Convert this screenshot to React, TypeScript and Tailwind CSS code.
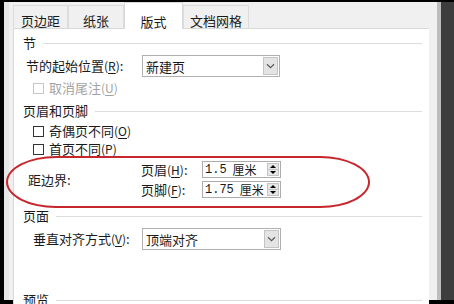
import React from 'react'

const FONT = "font-['Noto_Sans_CJK_SC','Microsoft_YaHei',sans-serif]"

const TABS = [
  { label: '页边距', w: 'w-[55px]', active: false },
  { label: '纸张', w: 'w-[56px]', active: false },
  { label: '版式', w: 'w-[59px]', active: true },
  { label: '文档网格', w: 'w-[66px]', active: false },
]

function GroupHeader({ title, className = '' }: { title: string; className?: string }) {
  return (
    <div className={`flex h-[16px] items-center ${className}`}>
      <span className="pl-[9px] pr-[7px] text-[13px] leading-[16px]">{title}</span>
      <div className="h-px flex-1 bg-[#dcdcdc]" />
    </div>
  )
}

// access key shown as "(X)" with the letter underlined
function Key({ k }: { k: string }) {
  return (
    <span className="text-[12px]">
      (<span className="underline underline-offset-2">{k}</span>)
    </span>
  )
}

function Chevron() {
  return (
    <svg width="9" height="6" viewBox="0 0 9 6">
      <path d="M1 1.2 L4.5 4.6 L8 1.2" fill="none" stroke="#5a5a5a" strokeWidth="1.2" />
    </svg>
  )
}

function Select({ value, className }: { value: string; className: string }) {
  return (
    <div className={`flex h-[22px] border border-[#b0b0b0] bg-white ${className}`}>
      <div className="flex flex-1 items-center pl-[3px] text-[13px] leading-none">{value}</div>
      <div className="m-px flex w-[15px] items-center justify-center border border-[#c4c4c4] bg-[#e4e4e4]">
        <Chevron />
      </div>
    </div>
  )
}

function Checkbox({ label, k, disabled }: { label: string; k: string; disabled?: boolean }) {
  return (
    <div className={`flex h-[16px] items-center pl-[19px] ${disabled ? 'text-[#a3a3a3]' : 'text-[#1a1a1a]'}`}>
      <div className={`h-[11px] w-[11px] bg-white border ${disabled ? 'border-[#c6c6c6]' : 'border-[#333333]'}`} />
      <span className="ml-[5px] text-[13px] leading-[16px]">
        {label}
        <Key k={k} />
      </span>
    </div>
  )
}

function Spin({ value }: { value: string }) {
  return (
    <div className="flex h-[17px] w-[79px] border border-[#acacac] bg-white">
      <div className="flex flex-1 items-center pl-[2px] leading-none">
        <span className="font-['Liberation_Mono',monospace] text-[12px]">{value}</span>
        <span className="ml-[6px] text-[12px]">厘米</span>
      </div>
      <div className="my-px mr-px flex w-[12px] flex-col border border-[#c4c4c4] bg-[#e6e6e6]">
        <div className="flex flex-1 items-center justify-center border-b border-[#c4c4c4]">
          <div className="h-0 w-0 border-x-[3px] border-b-[3px] border-x-transparent border-b-black" />
        </div>
        <div className="flex flex-1 items-center justify-center">
          <div className="h-0 w-0 border-x-[3px] border-t-[3px] border-x-transparent border-t-black" />
        </div>
      </div>
    </div>
  )
}

export default function App() {
  return (
    <div className={`relative flex h-[304px] w-[454px] overflow-hidden bg-black pt-[2px] pb-[4px] pl-[4px] ${FONT} text-[#1a1a1a]`}>
      {/* sliver of the document behind */}
      <div className="w-[5px] bg-[#e6e6e6]" />

      {/* dialog */}
      <div className="flex w-[428px] flex-col bg-[#f0f0f0]">
        <div className="relative z-10 flex h-[27px] items-end pl-[4px]">
          {TABS.map((t) =>
            t.active ? (
              <div
                key={t.label}
                className={`${t.w} -mb-px flex h-[27px] justify-center border-x border-t border-[#d9d9d9] bg-white pt-[12px] text-[13px] leading-[14px]`}
              >
                {t.label}
              </div>
            ) : (
              <div
                key={t.label}
                className={`${t.w} flex h-[23px] justify-center border-x border-t border-[#dcdcdc] bg-[#f0f0f0] pt-[8px] text-[13px] leading-[14px]`}
              >
                {t.label}
              </div>
            )
          )}
        </div>

        <div className="ml-[4px] flex w-[416px] flex-1 flex-col border-l border-t border-[#d9d9d9] bg-white pr-[7px] pt-[6px]">
          <GroupHeader title="节" />
          <div className="mt-[4px] flex items-center pl-[12px]">
            <span className="w-[116px] text-[13px] leading-[16px]">
              节的起始位置<Key k="R" />:
            </span>
            <Select value="新建页" className="w-[138px]" />
          </div>
          <div className="mt-[3px]">
            <Checkbox label="取消尾注" k="U" disabled />
          </div>

          <GroupHeader title="页眉和页脚" className="mt-[7px]" />
          <div className="mt-[4px]">
            <Checkbox label="奇偶页不同" k="O" />
          </div>
          <div className="mt-[2px]">
            <Checkbox label="首页不同" k="P" />
          </div>

          <div className="mt-[4px] flex items-center pl-[14px]">
            <span className="w-[113px] text-[13px] leading-[16px]">距边界:</span>
            <div className="flex flex-col gap-[3px]">
              <div className="flex items-center">
                <span className="w-[61px] text-[13px] leading-[16px]">
                  页眉<Key k="H" />:
                </span>
                <Spin value="1.5" />
              </div>
              <div className="flex items-center">
                <span className="w-[61px] text-[13px] leading-[16px]">
                  页脚<Key k="F" />:
                </span>
                <Spin value="1.75" />
              </div>
            </div>
          </div>

          <GroupHeader title="页面" className="mt-[10px]" />
          <div className="mt-[4px] flex items-center pl-[19px]">
            <span className="w-[109px] text-[13px] leading-[16px]">
              垂直对齐方式<Key k="V" />:
            </span>
            <Select value="顶端对齐" className="w-[139px]" />
          </div>

          <GroupHeader title="预览" className="mt-[42px]" />
        </div>
      </div>

      {/* window edge on the right */}
      <div className="w-[4px] bg-[#bdbdbd]" />
      <div className="flex-1 bg-[#3d3d3d]" />

      {/* red annotation ring */}
      <div className="absolute left-[6px] top-[156px] h-[52px] w-[364px] rounded-[50px/26px] border-2 border-[#c8262d]" />
    </div>
  )
}
